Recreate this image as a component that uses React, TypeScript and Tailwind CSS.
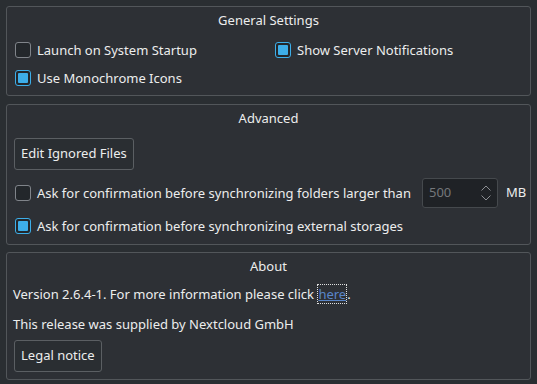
import type { ReactNode } from "react";

const font = { fontFamily: '"Noto Sans", "Open Sans", sans-serif' };

function GroupBox({
  title,
  className,
  children,
}: {
  title: string;
  className?: string;
  children: ReactNode;
}) {
  return (
    <div
      className={`mx-[6px] flex flex-col rounded-[3px] border border-[#52565a] bg-[#2d3035] ${className ?? ""}`}
    >
      <div className="text-center leading-[26px]">{title}</div>
      {children}
    </div>
  );
}

function CheckBox({ checked, label }: { checked?: boolean; label: string }) {
  return (
    <div className="flex items-center gap-[6px] whitespace-nowrap leading-[18px]">
      <span
        className={`flex h-[16px] w-[16px] shrink-0 items-center justify-center rounded-[3px] border ${
          checked ? "border-[#3daee9]" : "border-[#80848a]"
        } bg-[#23272b]`}
      >
        {checked && <span className="h-[10px] w-[10px] rounded-[1px] bg-[#3daee9]" />}
      </span>
      <span>{label}</span>
    </div>
  );
}

function Button({ children, className }: { children: ReactNode; className?: string }) {
  return (
    <div
      className={`flex h-[32px] items-center whitespace-nowrap rounded-[3px] border border-[#5b5f63] bg-[#2a2e32] px-[6px] ${className ?? ""}`}
    >
      {children}
    </div>
  );
}

export default function App() {
  return (
    <div
      className="flex h-[384px] w-[537px] flex-col bg-[#2a2e32] pt-[6px] text-[13px] text-[#eceded]"
      style={font}
    >
      <GroupBox title="General Settings" className="h-[90px]">
        <div className="grid grid-cols-[260px_1fr] gap-y-[10px] pl-[8px] pt-[8px]">
          <CheckBox label="Launch on System Startup" />
          <CheckBox checked label="Show Server Notifications" />
          <CheckBox checked label="Use Monochrome Icons" />
        </div>
      </GroupBox>

      <GroupBox title="Advanced" className="mt-[8px] h-[141px]">
        <div className="flex flex-col pl-[7px] pr-[6px]">
          <Button className="mt-[7px] w-[120px]">Edit Ignored Files</Button>
          <div className="mt-[8px] flex items-center">
            <div className="pl-[1px]">
              <CheckBox label="Ask for confirmation before synchronizing folders larger than" />
            </div>
            <div className="ml-[11px] flex h-[30px] w-[76px] shrink-0 items-center justify-between rounded-[3px] border border-[#45494d] bg-[#1f2226] pl-[6px] pr-[5px] text-[#74777b]">
              <span>500</span>
              <svg width="12" height="18" viewBox="0 0 12 18" fill="none" stroke="#8b8e92" strokeWidth="1">
                <path d="M1.5 6.5 L6 2 L10.5 6.5" />
                <path d="M1.5 11.5 L6 16 L10.5 11.5" />
              </svg>
            </div>
            <span className="ml-[8px]">MB</span>
          </div>
          <div className="mt-[9px] pl-[1px]">
            <CheckBox checked label="Ask for confirmation before synchronizing external storages" />
          </div>
        </div>
      </GroupBox>

      <GroupBox title="About" className="mt-[7px] h-[128px]">
        <div className="flex flex-col pl-[6px]">
          <div className="mt-[3px] whitespace-nowrap leading-[24px]">
            Version 2.6.4-1. For more information please click{" "}
            <span className="border border-dotted border-[#e0e0e0] text-[#5a86c8] underline">here</span>
            <span>.</span>
          </div>
          <div className="mt-[6px] leading-[24px]">This release was supplied by Nextcloud GmbH</div>
          <Button className="ml-[1px] mt-[4px] w-[88px]">Legal notice</Button>
        </div>
      </GroupBox>
    </div>
  );
}
